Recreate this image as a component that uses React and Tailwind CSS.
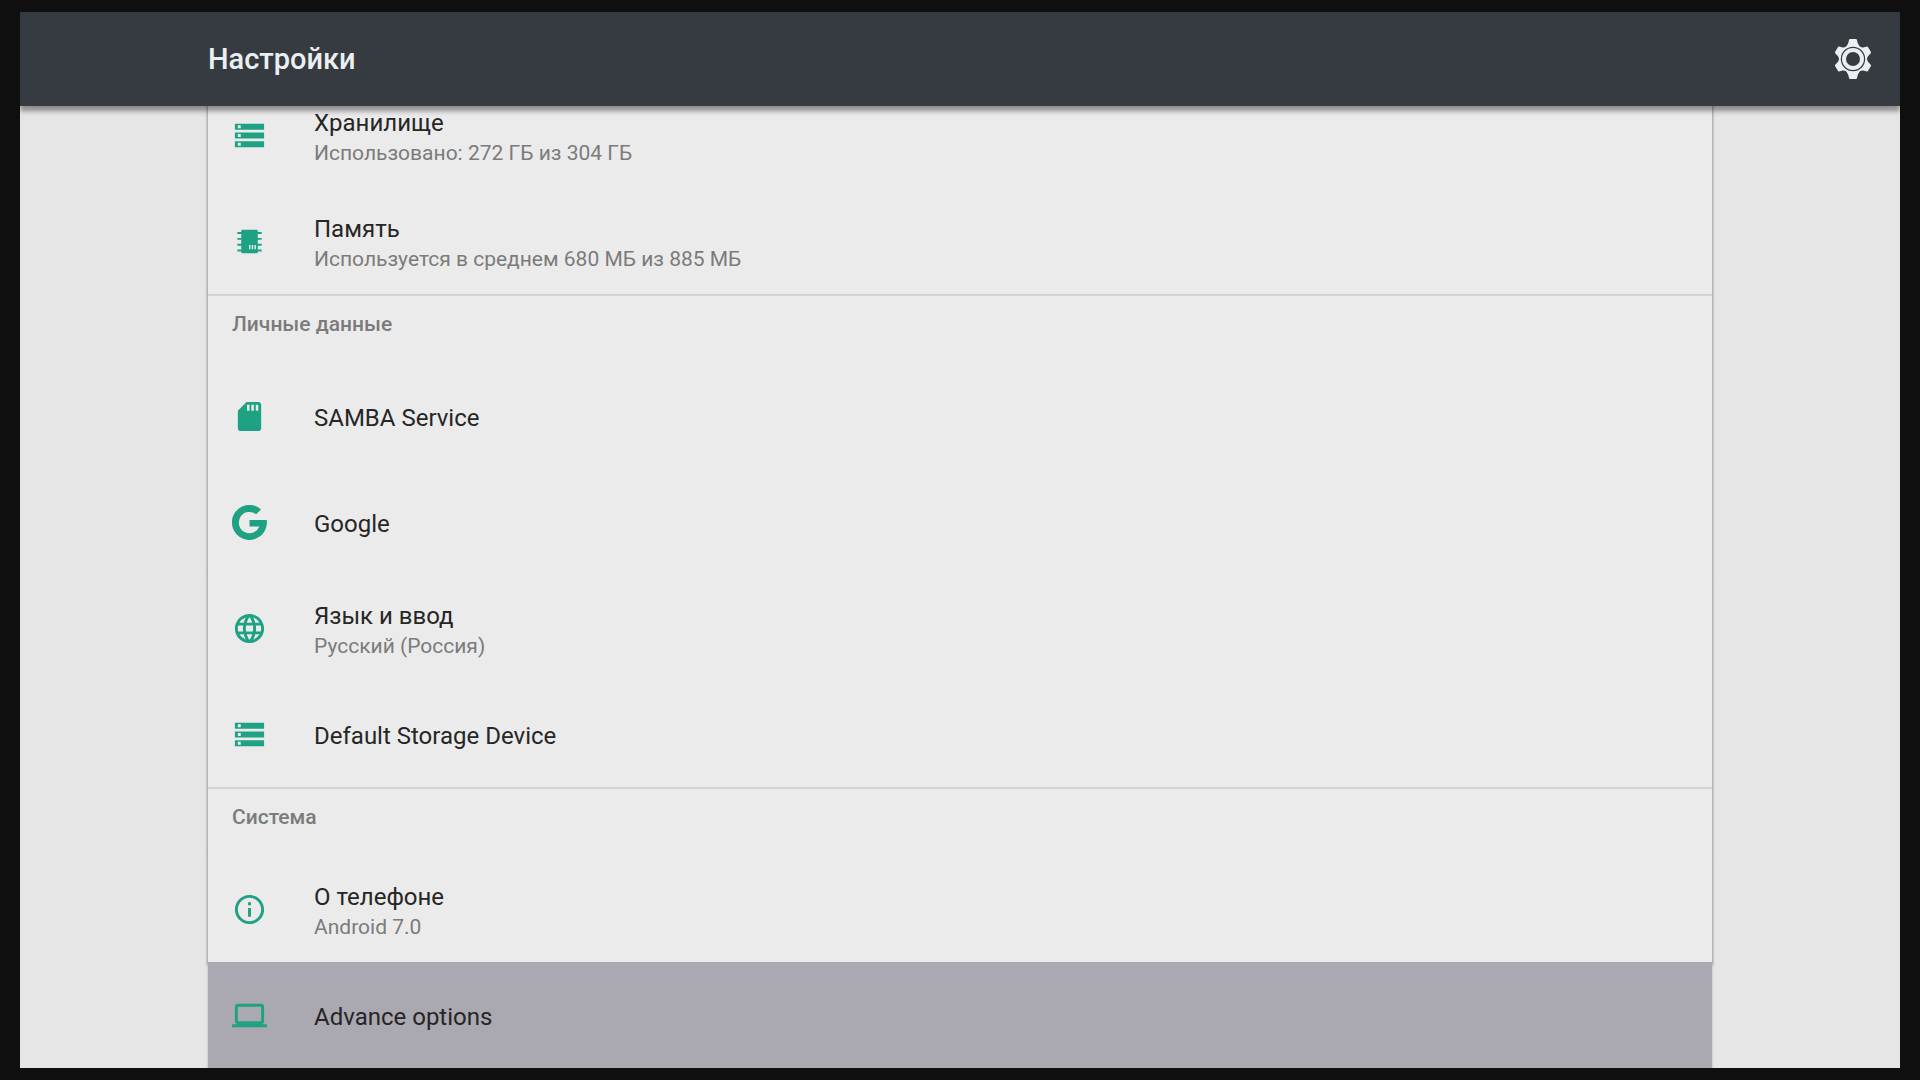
import React, { useState } from 'react'
import { MdStorage, MdLanguage, MdInfoOutline, MdLaptop } from 'react-icons/md'

const MemoryIcon = ({ className }) => (
  <svg viewBox="0 0 36 36" className={className} fill="currentColor" aria-hidden="true">
    <path
      fillRule="evenodd"
      d="M10.500 6h15a1 1 0 0 1 1 1v1.300h4v2h-4v4h4v2h-4v4h4v2h-4v4h4v2h-4V29a1 1 0 0 1-1 1h-15a1 1 0 0 1-1-1v-.7h-4v-2h4v-4h-4v-2h4v-4h-4v-2h4v-4h-4v-2h4V7a1 1 0 0 1 1-1zM17.500 21.500v4.500h1.500v-4.500zM20.300 21.500v4.500h1.500v-4.500zM23.100 21.500v4.500h1.500v-4.500z"
    />
  </svg>
)

const SdCardIcon = ({ className }) => (
  <svg viewBox="0 0 24 24" className={className} fill="currentColor" aria-hidden="true">
    <path d="M18 2h-8L4 8v12c0 1.100.9 2 2 2h12c1.100 0 2-.9 2-2V4c0-1.100-.9-2-2-2zm-6 6h-1.700V4H12v4zm3 0h-1.700V4H15v4zm3 0h-1.700V4H18v4z" />
  </svg>
)

const GoogleIcon = ({ className }) => (
  <svg viewBox="0 0 24 24" className={className} fill="currentColor" aria-hidden="true">
    <path d="M19.900 3A12 12 0 1 0 23.800 10.200H12v4.500h6.800A7.300 7.300 0 1 1 16.500 6.300Z" />
  </svg>
)

// The two vertical teeth are a little longer than the four side ones
const gearTeeth = [
  { angle: 0, length: 1 },
  { angle: 60, length: 0.95 },
  { angle: 120, length: 0.95 },
  { angle: 180, length: 1 },
  { angle: 240, length: 0.95 },
  { angle: 300, length: 0.95 }
]

const GearIcon = ({ className }) => (
  <svg viewBox="-20 -20 40 40" className={className} aria-hidden="true">
    <g fill="#eceff1">
      <circle r="14.200" />
      {gearTeeth.map(({ angle, length }) => (
        <path
          key={angle}
          d="M-3-20H3Q3.700-20 3.900-19.200L4.900-15.500 7-12H-7L-4.900-15.500-3.900-19.200Q-3.700-20-3-20Z"
          transform={`rotate(${angle}) scale(1 ${length})`}
        />
      ))}
    </g>
    <circle r="11.600" fill="none" stroke="#353b40" strokeWidth="1.200" />
    <circle r="7" fill="#353b40" />
  </svg>
)

const sections = [
  {
    id: 'device',
    items: [
      { id: 'storage', icon: MdStorage, title: 'Хранилище', summary: 'Использовано: 272 ГБ из 304 ГБ' },
      { id: 'memory', icon: MemoryIcon, title: 'Память', summary: 'Используется в среднем 680 МБ из 885 МБ' }
    ]
  },
  {
    id: 'personal',
    title: 'Личные данные',
    items: [
      { id: 'samba', icon: SdCardIcon, title: 'SAMBA Service' },
      { id: 'google', icon: GoogleIcon, title: 'Google' },
      { id: 'language', icon: MdLanguage, title: 'Язык и ввод', summary: 'Русский (Россия)' },
      { id: 'default-storage', icon: MdStorage, title: 'Default Storage Device' }
    ]
  },
  {
    id: 'system',
    title: 'Система',
    items: [
      { id: 'about', icon: MdInfoOutline, title: 'О телефоне', summary: 'Android 7.0' },
      { id: 'advance', icon: MdLaptop, title: 'Advance options' }
    ]
  }
]

const SettingsRow = ({ item, selected, onSelect }) => {
  const Icon = item.icon

  return (
    <li>
      <button
        onClick={() => onSelect(item.id)}
        className={`flex h-[106px] w-full items-center pl-6 text-left ${
          selected
            ? 'bg-[#aaa8b0] shadow-[0_3px_3px_rgba(0,0,0,0.2)]'
            : 'bg-[#ebebeb] shadow-[0_3px_3px_rgba(0,0,0,0.6)]'
        }`}
      >
        <Icon className="mr-[47px] size-[35px] shrink-0 text-[#1fa183]" />
        <span className="flex flex-col pt-1">
          <span className="text-[24px] leading-8 text-[#262626]">{item.title}</span>
          {item.summary && (
            <span className="text-[21px] leading-7 text-[#7b7b7b]">{item.summary}</span>
          )}
        </span>
      </button>
    </li>
  )
}

const App = () => {
  const [selectedId, setSelectedId] = useState('advance')

  return (
    <div className="h-screen bg-[#0f0f0f] px-5 py-3 font-['Roboto',sans-serif]">
      <div className="flex h-full flex-col overflow-hidden bg-[#e6e6e6]">
        {/* Header */}
        <header className="z-10 flex h-[94px] shrink-0 items-center justify-between bg-[#353b40] pr-[27px] pl-[10%] shadow-[0_5px_5px_rgba(0,0,0,0.4)]">
          <h1 className="pt-0.5 text-[29px] font-medium text-[#eceff1]">Настройки</h1>
          <button aria-label="Настройки системы">
            <GearIcon className="size-10" />
          </button>
        </header>

        {/* List, scrolled a little under the header */}
        <main className="-mt-6 px-[10%]">
          {sections.map((section) => (
            <section key={section.id}>
              {section.title && (
                <h2 className="h-[69px] border-t-2 border-[#d4d4d4] bg-[#ebebeb] pl-6 text-[21px] leading-[56px] font-medium text-[#7b7b7b] shadow-[0_3px_3px_rgba(0,0,0,0.6)]">
                  {section.title}
                </h2>
              )}
              <ul>
                {section.items.map((item) => (
                  <SettingsRow
                    key={item.id}
                    item={item}
                    selected={item.id === selectedId}
                    onSelect={setSelectedId}
                  />
                ))}
              </ul>
            </section>
          ))}
        </main>
      </div>
    </div>
  )
}

export default App
